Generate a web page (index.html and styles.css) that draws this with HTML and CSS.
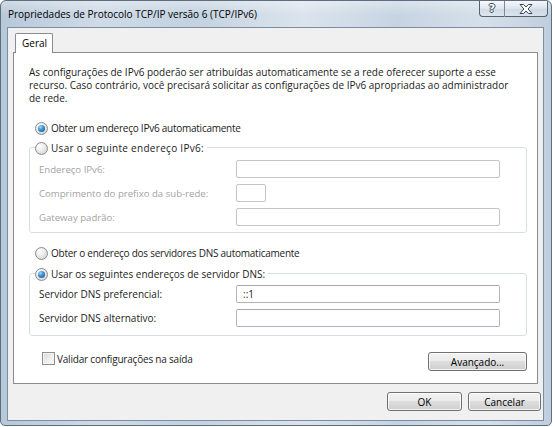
FILE: index.html
```html
<!DOCTYPE html>
<html lang="pt">
<head>
<meta charset="utf-8">
<title>Propriedades de Protocolo TCP/IP versão 6 (TCP/IPv6)</title>
<link rel="stylesheet" href="styles.css">
</head>
<body>
<div class="window">
  <div class="titlebar">
    <div class="title">Propriedades de Protocolo TCP/IP versão 6 (TCP/IPv6)</div>
    <div class="caption-btns">
      <div class="cbtn help"><span class="help-glyph">?</span></div>
      <div class="cbtn close">
        <svg width="14" height="10" viewBox="0 0 14 10"><path d="M1 .5H4.6L7 3 9.4.5H13L9.1 5 13 9.5H9.4L7 7 4.6 9.5H1L4.9 5Z" fill="#fff" stroke="#3d4753" stroke-width="1" stroke-linejoin="round"/></svg>
      </div>
    </div>
  </div>
  <div class="client">
    <div class="tabs"><div class="tab">Geral</div></div>
    <div class="panel">
      <p class="intro">As configurações de IPv6 poderão ser atribuídas automaticamente se a rede oferecer suporte a esse<br>recurso. Caso contrário, você precisará solicitar as configurações de IPv6 apropriadas ao administrador<br>de rede.</p>

      <div class="radio-row first"><span class="radio checked"></span><span class="rtext">Obter um endereço IPv6 automaticamente</span></div>

      <div class="group g1">
        <div class="legend"><span class="radio"></span><span class="ltext wide-text">Usar o seguinte endereço IPv6:</span></div>
        <div class="fields f1">
          <span class="lbl dis">Endereço IPv6:</span><span class="input dis wide"></span>
          <span class="lbl dis">Comprimento do prefixo da sub-rede:</span><span class="input dis small"></span>
          <span class="lbl dis">Gateway padrão:</span><span class="input dis wide"></span>
        </div>
      </div>

      <div class="radio-row third"><span class="radio"></span><span class="rtext">Obter o endereço dos servidores DNS automaticamente</span></div>

      <div class="group g2">
        <div class="legend"><span class="radio checked"></span><span class="ltext">Usar os seguintes endereços de servidor DNS:</span></div>
        <div class="fields f2">
          <span class="lbl">Servidor DNS preferencial:</span><span class="input wide"><span class="val">::1</span></span>
          <span class="lbl">Servidor DNS alternativo:</span><span class="input wide"></span>
        </div>
      </div>

      <div class="bottom-row">
        <div class="check-row"><span class="checkbox"></span><span class="ctext">Validar configurações na saída</span></div>
        <div class="btn adv">Avançado...</div>
      </div>
    </div>
    <div class="footer">
      <div class="btn ok">OK</div>
      <div class="btn cancel">Cancelar</div>
    </div>
  </div>
</div>
</body>
</html>
```
FILE: styles.css
```css
html, body {
  margin: 0;
  padding: 0;
}
body {
  background: #ffffff;
  font-family: "Open Sans", "Liberation Sans", sans-serif;
  font-size: 10px;
  color: #1b1b1b;
  width: 555px;
  height: 427px;
  overflow: hidden;
}
.window {
  width: 552px;
  height: 426px;
  box-sizing: border-box;
  border: 1px solid #5f6e7e;
  border-radius: 6px 6px 5px 5px;
  background:
    linear-gradient(180deg, rgba(255,255,255,0.35) 0px, rgba(255,255,255,0) 14px),
    linear-gradient(90deg, #b7c8d9 0%, #cfdbe7 18%, #c3d2e0 35%, #dbe4ed 55%, #c6d4e2 72%, #d6e0ea 88%, #bfcedd 100%);
  display: flex;
  flex-direction: column;
  overflow: hidden;
}
.titlebar {
  height: 26px;
  display: flex;
  flex-shrink: 0;
}
.title {
  padding-left: 7px;
  line-height: 26px;
  font-size: 10px;
  color: #000;
  white-space: nowrap;
}
.caption-btns {
  margin-left: auto;
  margin-right: 3px;
  display: flex;
  align-self: flex-start;
}
.cbtn {
  height: 16px;
  box-sizing: border-box;
  border: 1px solid #56626f;
  border-top: none;
  background: linear-gradient(180deg, rgba(255,255,255,0.75), rgba(225,232,240,0.55) 50%, rgba(200,212,225,0.5) 51%, rgba(225,233,242,0.7));
  display: flex;
  align-items: center;
  justify-content: center;
}
.cbtn.help {
  width: 25px;
  border-radius: 0 0 0 4px;
  border-right: none;
}
.cbtn.close {
  width: 44px;
  border-radius: 0 0 4px 0;
  border-left: 1px solid #7d8996;
}
.help-glyph {
  font-family: "DejaVu Sans", sans-serif;
  font-weight: bold;
  font-size: 11px;
  line-height: 11px;
  color: #fff;
  text-shadow: 1px 0 #3d4753, -1px 0 #3d4753, 0 1px #3d4753, 0 -1px #3d4753;
}
.client {
  margin-left: 6px;
  width: 537px;
  height: 394px;
  box-sizing: border-box;
  border: 1px solid #7d8ea1;
  background: #f0f0f0;
  display: flex;
  flex-direction: column;
}
.tabs {
  display: flex;
  padding-left: 7px;
  margin-top: 5px;
}
.tab {
  position: relative;
  z-index: 1;
  width: 38px;
  height: 20px;
  box-sizing: border-box;
  border: 1px solid #898c95;
  border-bottom: none;
  border-radius: 2px 2px 0 0;
  background: #fff;
  margin-bottom: -1px;
  padding-left: 6px;
  line-height: 19px;
  color: #000;
}
.panel {
  margin: 0 5px;
  height: 332px;
  box-sizing: border-box;
  border: 1px solid #898c95;
  background: #fff;
  display: flex;
  flex-direction: column;
}
.intro {
  margin: 13px 0 0 15px;
  line-height: 13px;
  white-space: nowrap;
}
.radio-row {
  display: flex;
  align-items: center;
  height: 18px;
  gap: 3px;
  padding-left: 21px;
}
.rtext {
  letter-spacing: -0.25px;
  white-space: nowrap;
}
.ctext {
  letter-spacing: -0.2px;
  white-space: nowrap;
}
.radio-row.first { margin-top: 14px; }
.radio-row.third { margin-top: 11px; }
.radio {
  width: 13px;
  height: 13px;
  flex-shrink: 0;
  box-sizing: border-box;
  border-radius: 50%;
  border: 1px solid #8b8b8b;
  background: radial-gradient(circle at 35% 30%, #ffffff 0%, #eaeaea 45%, #cdcdcd 100%);
  display: flex;
  align-items: center;
  justify-content: center;
}
.radio.checked::after {
  content: "";
  width: 7px;
  height: 7px;
  border-radius: 50%;
  background: radial-gradient(circle at 35% 30%, #a6dcfa 0%, #3b95d6 40%, #14508c 100%);
}
.group {
  margin: 0 10px 0 15px;
  border: 1px solid #d5dfe5;
  border-radius: 3px;
}
.g1 { margin-top: 10px; }
.g2 { margin-top: 11px; }
.legend {
  display: flex;
  align-items: center;
  gap: 3px;
  height: 18px;
  margin-top: -9px;
  margin-left: 5px;
  padding-right: 3px;
  background: #fff;
  width: max-content;
}
.ltext {
  white-space: nowrap;
}
.ltext.wide-text {
  letter-spacing: 0.3px;
}
.fields {
  display: grid;
  grid-template-columns: 197px auto;
  grid-auto-rows: 18px;
  row-gap: 6px;
  padding-left: 9px;
  align-items: center;
}
.f1 { margin-top: 3px; padding-bottom: 6px; }
.f2 { margin-top: 2px; padding-bottom: 8px; }
.lbl {
  white-space: nowrap;
}
.lbl.dis {
  color: #a3a3a3;
  font-size: 9.6px;
}
.input {
  height: 18px;
  box-sizing: border-box;
  border: 1px solid #b3b5ba;
  border-top-color: #a5a8ae;
  border-radius: 2px;
  background: #fff;
  display: flex;
  align-items: center;
}
.input.dis {
  border-color: #c2c4c8;
}
.input.wide { width: 264px; }
.input.small { width: 30px; }
.val {
  padding-left: 6px;
}
.bottom-row {
  margin-top: 16px;
  display: flex;
  align-items: flex-start;
  justify-content: space-between;
  padding: 0 10px 0 28px;
}
.check-row {
  display: flex;
  align-items: center;
  gap: 2px;
  height: 13px;
  margin-top: 0;
}
.checkbox {
  width: 13px;
  height: 13px;
  box-sizing: border-box;
  border: 1px solid #8e8f8f;
  background: linear-gradient(135deg, #d8d8d8 0%, #f0f0f0 60%, #fbfbfb 100%);
  box-shadow: inset 0 0 0 1px #f4f4f4;
}
.btn {
  height: 19px;
  box-sizing: border-box;
  border: 1px solid #707070;
  border-radius: 3px;
  background: linear-gradient(180deg, #f2f2f2 0%, #ebebeb 49%, #dddddd 50%, #cfcfcf 100%);
  box-shadow: inset 0 0 0 1px rgba(255,255,255,0.75);
  display: flex;
  align-items: center;
  justify-content: center;
  color: #000;
}
.btn.adv { width: 99px; }
.footer {
  display: flex;
  justify-content: flex-end;
  gap: 6px;
  margin-top: 8px;
  padding-right: 2px;
}
.btn.ok { width: 75px; }
.btn.cancel { width: 73px; }
```
